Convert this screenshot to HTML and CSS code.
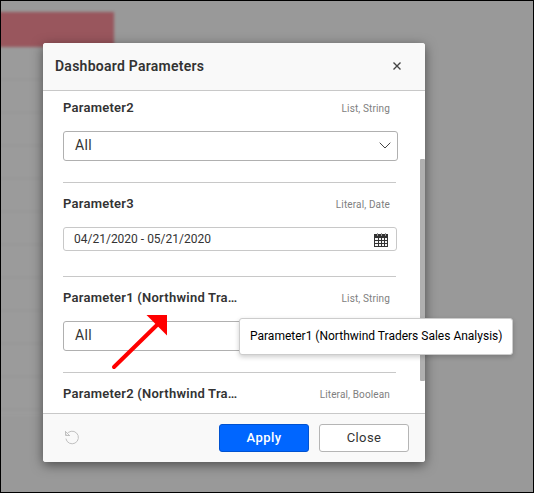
FILE: index.html
```html
<!DOCTYPE html>
<html lang="en">
<head>
<meta charset="utf-8">
<title>Dashboard Parameters</title>
<link rel="stylesheet" href="styles.css">
</head>
<body>
<div class="backdrop"><div class="table"><div class="table-head"></div><div class="table-rows"></div></div></div>
<main class="dialog">
  <header class="dialog-head">
    <h1>Dashboard Parameters</h1>
    <svg class="close-icon" width="8" height="8" viewBox="0 0 8 8"><path d="M.5.5 7.5 7.5M7.5.5.5 7.5"/></svg>
  </header>
  <div class="dialog-body">
    <section class="param">
      <div class="param-head"><h2>Parameter2</h2><span>List, String</span></div>
      <div class="select"><span>All</span><svg width="12" height="7" viewBox="0 0 12 7"><path d="M.7.7 6 6 11.3.7"/></svg></div>
    </section>
    <section class="param date">
      <div class="param-head"><h2>Parameter3</h2><span>Literal, Date</span></div>
      <div class="date-input"><span>04/21/2020 - 05/21/2020</span>
        <svg width="14" height="14" viewBox="0 0 14 14"><path class="cal" d="M0 1h14v13H0z"/><path class="cells" d="M1 5h3v2H1zM5 5h2v2H5zM8 5h2v2H8zM11 5h2v2h-2zM1 8h3v2H1zM5 8h2v2H5zM8 8h2v2H8zM11 8h2v2h-2zM1 11h3v2H1zM5 11h2v2H5zM8 11h2v2H8zM11 11h2v2h-2z"/><path class="rings" d="M3.500 0v3M7.500 0v3M11.500 0v3"/></svg>
      </div>
    </section>
    <section class="param">
      <div class="param-head"><h2>Parameter1 (Northwind Tra…</h2><span>List, String</span></div>
      <div class="select"><span>All</span></div>
    </section>
    <section class="param">
      <div class="param-head"><h2>Parameter2 (Northwind Tra…</h2><span>Literal, Boolean</span></div>
    </section>
    <div class="scroll-thumb"></div>
  </div>
  <footer class="dialog-foot">
    <svg class="reset" width="16" height="16" viewBox="0 0 16 16"><path d="M2.500 4.600A6.300 6.300 0 1 1 1.900 8.600M1.500 1v4.500H6M1.500 1.500l3.500 3.500"/></svg>
    <button class="primary">Apply</button>
    <button>Close</button>
  </footer>
</main>
<svg class="arrow" width="60" height="60" viewBox="0 0 60 60"><path class="shaft" d="M4 56 48 13"/><path class="tip" d="M36.500 4H57V24.500z"/></svg>
<div class="tooltip">Parameter1 (Northwind Traders Sales Analysis)</div>
</body>
</html>
```
FILE: styles.css
```css
* { box-sizing: border-box; }
body { margin: 0; width: 534px; height: 493px; overflow: hidden; position: relative; padding: 43px; font-family: Roboto, sans-serif; color: #333; background: #999; }
body::after { content: ""; position: absolute; inset: 0; border: 1px solid #000; }
.backdrop { position: absolute; inset: 0; }
.table { width: 114px; padding-top: 12px; filter: blur(1.5px); }
.table-head { height: 35px; margin-left: -5px; background: #99565d; }
.table-rows { height: 370px; margin-left: -5px; background: repeating-linear-gradient(#9b9b9b 0 32px, #929292 32px 33px); }
.dialog { position: relative; width: 382px; height: 419px; display: flex; flex-direction: column; background: #fff; border-radius: 3px; overflow: hidden; box-shadow: 0 3px 12px rgba(0,0,0,.5); }
.dialog-head { height: 48px; flex: none; display: flex; align-items: center; justify-content: space-between; padding: 0 24px 2px 12px; background: #f9f9f9; border-bottom: 1px solid #c8c8c8; }
h1, h2 { margin: 0; font-weight: 600; }
h1 { font-size: 14px; letter-spacing: .25px; }
svg { display: block; fill: none; stroke: #444; }
.close-icon { stroke-width: 1.4; }
.dialog-body { position: relative; height: 322px; flex: none; overflow: hidden; padding: 0 28px 0 20px; }
.param { height: 96px; width: 333px; border-top: 1px solid #c8c8c8; padding-top: 12px; }
.param:first-child { height: 91px; border: 0; padding-top: 8px; }
.param.date { height: 94px; }
.param-head { height: 18px; display: flex; justify-content: space-between; align-items: center; padding-right: 6px; }
h2 { font-size: 13px; line-height: 18px; letter-spacing: .24px; white-space: nowrap; }
.param-head span { color: #808080; font-size: 10px; letter-spacing: .13px; padding-top: 1px; }
.select { width: 335px; height: 30px; margin-top: 14px; border: 1px solid #b0b0b0; border-radius: 3px; padding: 0 6px 2px 11px; display: flex; align-items: center; justify-content: space-between; font-size: 14px; letter-spacing: .4px; }
.date-input { width: 334px; height: 24px; margin-top: 14px; border: 1px solid #c8c8c8; border-radius: 3px; padding: 0 8px 0 10px; display: flex; align-items: center; justify-content: space-between; font-size: 12px; }
.date-input svg { margin-top: 1px; }
.cal { fill: #333; stroke: none; }
.cells { fill: #f4f4f4; stroke: none; }
.rings { stroke: #999; }
.scroll-thumb { position: absolute; right: 0; top: 68px; width: 5px; height: 222px; background: #b0b0b0; border-radius: 1px; }
.dialog-foot { flex: 1; border-top: 1px solid #c8c8c8; background: #f9f9f9; display: flex; align-items: center; gap: 10px; padding: 0 16px 0 21px; }
.reset { stroke: #c0c0c0; margin-right: auto; }
button { width: 90px; height: 28px; border: 1px solid #b5b5b5; border-radius: 3px; background: #fff; color: #333; font: 13px Roboto, sans-serif; letter-spacing: .4px; padding: 0 0 2px; }
.primary { color: #fff; background: #06f; border-color: #0052d0; font-weight: 500; }
.arrow { position: absolute; left: 110px; top: 311px; }
.shaft { stroke: red; stroke-width: 4; stroke-linecap: round; }
.tip { fill: red; stroke: none; }
.tooltip { position: absolute; left: 239px; top: 318px; width: 274px; height: 37px; border: 1px solid #ccc; border-radius: 3px; background: #fff; color: #000; font-size: 12px; line-height: 35px; padding-left: 10px; white-space: nowrap; box-shadow: 0 2px 5px rgba(0,0,0,.2); }
```
